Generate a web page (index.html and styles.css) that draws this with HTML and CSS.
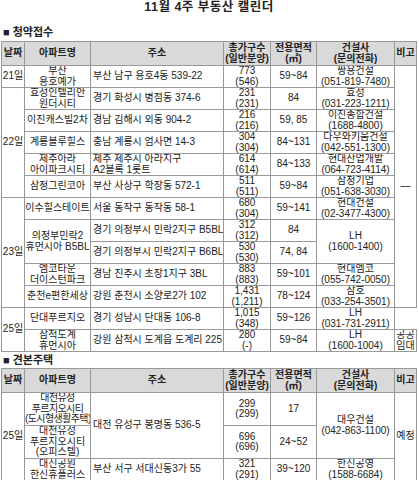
FILE: index.html
```html
<!DOCTYPE html>
<html lang="ko">
<head>
<meta charset="utf-8">
<title>11월 4주 부동산 캘린더</title>
<link rel="stylesheet" href="styles.css">
</head>
<body>
<div class="page">
  <h1 class="title">11월 4주 부동산 캘린더</h1>

  <h2 class="section">■ 청약접수</h2>
  <table class="cal">
    <colgroup>
      <col class="c-date"><col class="c-name"><col class="c-addr"><col class="c-total"><col class="c-area"><col class="c-builder"><col class="c-note">
    </colgroup>
    <thead>
      <tr><th>날짜</th><th>아파트명</th><th>주소</th><th>총가구수<br>(일반분양)</th><th>전용면적<br>(㎡)</th><th>건설사<br>(문의전화)</th><th>비고</th></tr>
    </thead>
    <tbody>
      <tr><td>21일</td><td>부산<br>용호예가</td><td class="addr">부산 남구 용호4동 539-22</td><td>773<br>(546)</td><td>59~84</td><td>쌍용건설<br>(051-819-7480)</td><td rowspan="11">—</td></tr>
      <tr><td rowspan="5">22일</td><td>효성인텔리안<br>원더시티</td><td class="addr">경기 화성시 병점동 374-6</td><td>231<br>(231)</td><td>84</td><td>효성<br>(031-223-1211)</td></tr>
      <tr><td>이진캐스빌2차</td><td class="addr">경남 김해시 외동 904-2</td><td>216<br>(216)</td><td>59, 85</td><td>이진종합건설<br>(1688-4800)</td></tr>
      <tr><td>계룡블루힐스</td><td class="addr">충남 계룡시 엄사면 14-3</td><td>304<br>(304)</td><td>84~131</td><td>다우와키움건설<br>(042-551-1300)</td></tr>
      <tr><td>제주아라<br>아이파크시티</td><td class="addr">제주 제주시 아라지구<br>A2블록 1롯트</td><td>614<br>(614)</td><td>84~133</td><td>현대산업개발<br>(064-723-4114)</td></tr>
      <tr><td>삼정그린코아</td><td class="addr">부산 사상구 학장동 572-1</td><td>511<br>(511)</td><td>59~84</td><td>삼정기업<br>(051-638-3030)</td></tr>
      <tr><td rowspan="5">23일</td><td>이수힐스테이트</td><td class="addr">서울 동작구 동작동 58-1</td><td>680<br>(304)</td><td>59~141</td><td>현대건설<br>(02-3477-4300)</td></tr>
      <tr><td rowspan="2">의정부민락2<br>휴먼시아 B5BL</td><td class="addr">경기 의정부시 민락2지구 B5BL</td><td>312<br>(312)</td><td>84</td><td rowspan="2">LH<br>(1600-1400)</td></tr>
      <tr><td class="addr">경기 의정부시 민락2지구 B6BL</td><td>530<br>(530)</td><td>74, 84</td></tr>
      <tr><td>엠코타운<br>더이스턴파크</td><td class="addr">경남 진주시 초장1지구 3BL</td><td>883<br>(883)</td><td>59~101</td><td>현대엠코<br>(055-742-0050)</td></tr>
      <tr><td>춘천e편한세상</td><td class="addr">강원 춘천시 소양로2가 102</td><td>1,431<br>(1,211)</td><td>78~124</td><td>삼호<br>(033-254-3501)</td></tr>
      <tr><td rowspan="2">25일</td><td>단대푸르지오</td><td class="addr">경기 성남시 단대동 106-8</td><td>1,015<br>(348)</td><td>59~126</td><td>LH<br>(031-731-2911)</td></tr>
      <tr><td>삼척도계<br>휴먼시아</td><td class="addr">강원 삼척시 도계읍 도계리 225</td><td>280<br>(-)</td><td>59~84</td><td>LH<br>(1600-1004)</td><td>공공<br>임대</td></tr>
    </tbody>
  </table>

  <h2 class="section section-2">■ 견본주택</h2>
  <table class="cal">
    <colgroup>
      <col class="c-date"><col class="c-name"><col class="c-addr"><col class="c-total"><col class="c-area"><col class="c-builder"><col class="c-note">
    </colgroup>
    <thead>
      <tr><th>날짜</th><th>아파트명</th><th>주소</th><th>총가구수<br>(일반분양)</th><th>전용면적<br>(㎡)</th><th>건설사<br>(문의전화)</th><th>비고</th></tr>
    </thead>
    <tbody>
      <tr class="tall"><td rowspan="3">25일</td><td class="tight">대전유성<br>푸르지오시티<br>(도시형생활주택)</td><td class="addr" rowspan="2">대전 유성구 봉명동 536-5</td><td>299<br>(299)</td><td>17</td><td rowspan="2">대우건설<br>(042-863-1100)</td><td rowspan="3">예정</td></tr>
      <tr class="tall"><td>대전유성<br>푸르지오시티<br>(오피스텔)</td><td>696<br>(696)</td><td>24~52</td></tr>
      <tr><td>대신공원<br>한신휴플러스</td><td class="addr">부산 서구 서대신동3가 55</td><td>321<br>(291)</td><td>39~120</td><td>한신공영<br>(1588-6684)</td></tr>
    </tbody>
  </table>
</div>
</body>
</html>
```

FILE: styles.css
```css
* { box-sizing: border-box; }

body {
  margin: 0;
  background: #ffffff;
  color: #222222;
  font-family: "Liberation Sans", "Noto Sans CJK KR", sans-serif;
}

.page {
  padding: 0 2px 0 1px;
}

.title {
  margin: 0;
  height: 14px;
  font-size: 12.5px;
  line-height: 14px;
  font-weight: bold;
  text-align: center;
  letter-spacing: 0.5px;
}

.section {
  margin: 11px 0 2px 2px;
  font-size: 11px;
  line-height: 14px;
  font-weight: bold;
}

.section-2 {
  margin-top: 1px;
  margin-bottom: 1px;
}

.cal {
  width: 416px;
  border-collapse: collapse;
  table-layout: fixed;
  font-size: 10px;
  line-height: 10.5px;
}

.c-date { width: 23px; }
.c-name { width: 66px; }
.c-addr { width: 133px; }
.c-total { width: 47px; }
.c-area { width: 46px; }
.c-builder { width: 78px; }
.c-note { width: 22px; }

.cal th,
.cal td {
  border: 1px solid #999999;
  padding: 0;
  text-align: center;
  vertical-align: middle;
  white-space: nowrap;
  overflow: hidden;
}

.cal th {
  height: 24px;
  background: #d9d9d9;
  font-weight: bold;
  font-size: 10px;
}

.cal td {
  height: 22px;
}

.cal .tall td {
  height: 33px;
}

.cal td.addr {
  text-align: left;
  padding-left: 2px;
}

.cal td.tight {
  letter-spacing: -0.6px;
}
```
